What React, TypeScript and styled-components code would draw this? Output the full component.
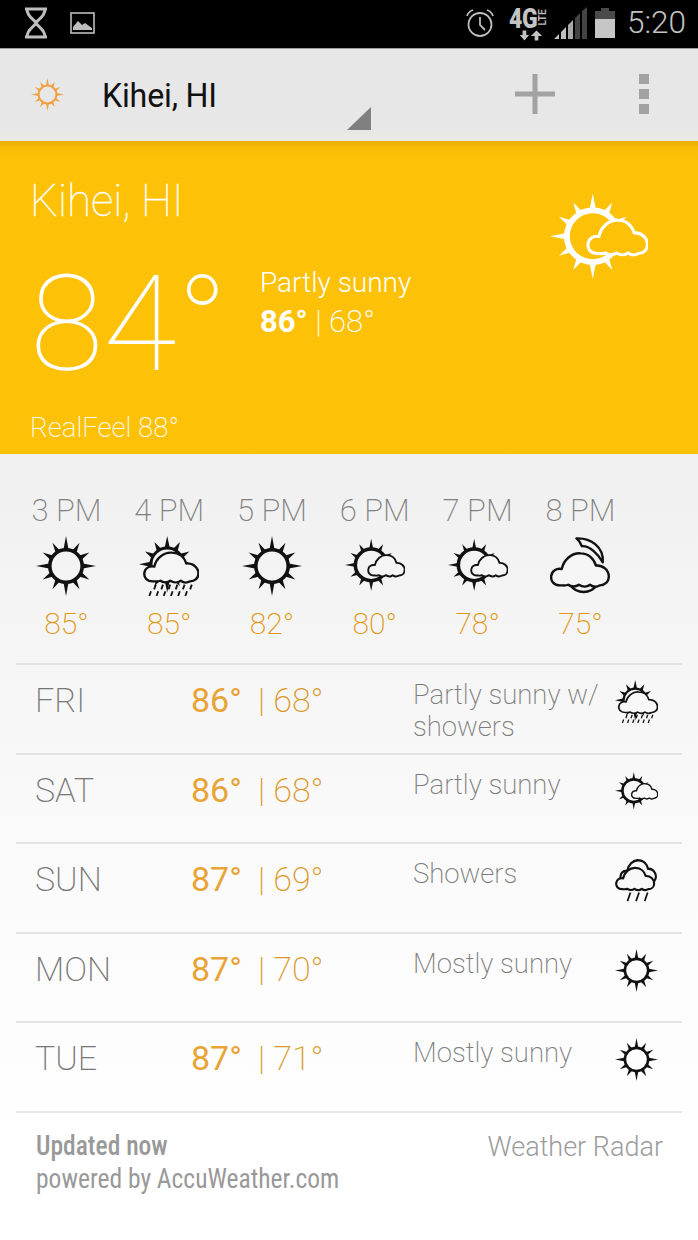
import React from "react";
import styled, { createGlobalStyle } from "styled-components";

const Global = createGlobalStyle`
  html, body { margin: 0; padding: 0; background: #fff; }
  body { font-family: Roboto, "Liberation Sans", sans-serif; }
  * { box-sizing: border-box; }
`;

const Page = styled.div`
  width: 698px;
  height: 1240px;
  overflow: hidden;
  display: flex;
  flex-direction: column;
  background: #fff;
`;

const StatusBar = styled.div`
  height: 49px;
  flex: none;
  background: #000;
  border-bottom: 1px solid #9a9a9a;
  display: flex;
  align-items: center;
  justify-content: space-between;
  padding: 0 12px 2px 24px;
  color: #bcbcbc;
`;
const StatusGroup = styled.div<{ $gap: number }>`
  display: flex;
  align-items: center;
  gap: ${(p) => p.$gap}px;
`;
const Network = styled.div`
  width: 38px;
  height: 34px;
  display: flex;
  flex-direction: column;
  align-items: flex-start;
  margin-left: 6px;
  margin-right: -1px;
`;
const NetworkTop = styled.div`
  display: flex;
  align-items: center;
  height: 22px;
  margin-top: 2px;
`;
const FourG = styled.span`
  font-size: 28px;
  font-weight: 900;
  line-height: 22px;
  letter-spacing: -0.5px;
  color: #c4c4c4;
  transform: scaleX(0.82);
  transform-origin: left center;
  width: 27px;
`;
const Lte = styled.span`
  font-size: 10px;
  font-weight: 700;
  color: #bbb;
  transform: rotate(-90deg);
  width: 12px;
`;
const ArrowSlot = styled.div`
  margin: 0 0 0 8px;
  display: flex;
`;
const Clock = styled.span`
  font-size: 31.5px;
  font-weight: 300;
  line-height: 36px;
  color: #c2c2c2;
  margin-left: 4px;
`;

const Toolbar = styled.div`
  height: 92px;
  flex: none;
  background: linear-gradient(#e7e7e7 0, #e7e7e7 90%, #ebebe6 100%);
  display: flex;
  align-items: center;
  padding: 0 49px 2px 31px;
`;
const Spinner = styled.div`
  position: relative;
  width: 300px;
  height: 100%;
  margin-left: 7px;
  padding-left: 31px;
  padding-top: 2px;
  display: flex;
  align-items: center;
`;
const Place = styled.span`
  font-size: 33px;
  font-weight: 400;
  color: #111;
  letter-spacing: -0.2px;
  transform: scaleX(0.975);
  transform-origin: left center;
  white-space: nowrap;
`;
const Corner = styled.div`
  position: absolute;
  right: 0;
  bottom: 9px;
  width: 0;
  height: 0;
  border-left: 24px solid transparent;
  border-bottom: 23px solid #808080;
`;
const Actions = styled.div`
  margin-left: auto;
  display: flex;
  align-items: center;
  gap: 84px;
`;
const Dots = styled.div`
  display: flex;
  flex-direction: column;
  gap: 5px;
`;
const Dot = styled.span`
  width: 10px;
  height: 10px;
  background: #a2a2a2;
`;

const Hero = styled.section`
  height: 313px;
  flex: none;
  background: linear-gradient(#e9ac0a 0, #f8bc06 6px, #fdc107 16px, #fdc107 100%);
  color: #fff;
  padding: 34px 50px 0 30px;
  position: relative;
  display: flex;
  flex-direction: column;
`;
const HeroCity = styled.div`
  font-size: 44px;
  font-weight: 100;
  line-height: 52px;
  -webkit-text-stroke: 0.3px #fff;
`;
const HeroMain = styled.div`
  display: flex;
  align-items: flex-start;
  margin-top: 31px;
`;
const BigTemp = styled.div`
  font-size: 134px;
  font-weight: 100;
  line-height: 134px;
  width: 230px;
  flex: none;
`;
const Summary = styled.div`
  padding-top: 6px;
`;
const SummaryText = styled.div`
  font-size: 28px;
  font-weight: 300;
  line-height: 38px;
`;
const SummaryTemps = styled.div`
  font-size: 31px;
  font-weight: 200;
  line-height: 40px;
  & b {
    font-weight: 700;
  }
`;
const RealFeel = styled.div`
  margin-top: auto;
  margin-bottom: 9px;
  font-size: 27.5px;
  font-weight: 200;
  line-height: 34px;
  opacity: 0.95;
`;
const HeroIcon = styled.div`
  position: absolute;
  left: 550px;
  top: 52px;
`;

const Body = styled.main`
  flex: 1;
  background: linear-gradient(#f0f0f0 0, #f7f7f7 260px, #fcfcfc 500px, #ffffff 720px);
  display: flex;
  flex-direction: column;
`;
const Hourly = styled.div`
  height: 209px;
  flex: none;
  padding: 38px 0 0 15px;
  display: grid;
  grid-template-columns: repeat(6, 102.8px);
  align-content: start;
`;
const Hour = styled.div`
  display: flex;
  flex-direction: column;
  align-items: center;
`;
const HourLabel = styled.div`
  font-size: 31px;
  font-weight: 200;
  line-height: 38px;
  color: #808080;
  white-space: nowrap;
`;
const HourIcon = styled.div`
  height: 62px;
  margin-top: 5px;
  display: flex;
  align-items: center;
  justify-content: center;
`;
const HourTemp = styled.div`
  font-size: 30px;
  font-weight: 200;
  line-height: 36px;
  margin-top: 9px;
  color: #e0960f;
`;

const Days = styled.div`
  margin: 0 16px;
  flex: none;
`;
const Day = styled.div`
  height: 89.6px;
  border-top: 2px solid #e3e3e3;
  display: grid;
  grid-template-columns: 156px 222px 190px 1fr;
  padding-left: 19px;
`;
const DayName = styled.div`
  font-size: 34px;
  font-weight: 200;
  line-height: 40px;
  padding-top: 15px;
  color: #777;
`;
const DayTemps = styled.div`
  font-size: 34px;
  font-weight: 400;
  line-height: 40px;
  padding-top: 15px;
  color: #e8a437;
  white-space: nowrap;
`;
const LowTemp = styled.span`
  font-weight: 200;
  color: #d99a2b;
  margin-left: 16px;
`;
const DayCond = styled.div`
  font-size: 27.5px;
  font-weight: 200;
  line-height: 32px;
  padding-top: 14px;
  color: #7c7c7c;
`;
const DayIcon = styled.div`
  display: flex;
  justify-content: center;
  padding-top: 15px;
  margin-left: 9px;
  width: 48px;
`;

const Footer = styled.footer`
  margin: 0 16px;
  border-top: 2px solid #e8e8e8;
  padding: 16px 19px 0 20px;
  display: flex;
  justify-content: space-between;
  color: #9a9a9a;
`;
const Credits = styled.div`
  font-size: 27px;
  font-weight: 400;
  line-height: 33px;
  font-stretch: 75%;
  color: #999;
  padding-top: 1px;
  transform: scaleX(0.945);
  transform-origin: left top;
  white-space: nowrap;
`;
const CreditsStrong = styled.div`
  font-weight: 500;
`;
const Radar = styled.div`
  font-size: 27px;
  font-weight: 300;
  line-height: 36px;
  color: #9c9c9c;
`;

const CLOUD =
  "M16 58 C5 58 0 50 1 42 C2 33 10 28 19 30 C22 14 36 2 51 3 C64 3 74 12 77 24 C89 23 99 32 99 43 C99 52 92 58 84 58 C79 61 72 61 67 57 C62 61 54 61 48 57 C43 61 35 61 30 57 C26 59 21 58 16 58 Z";

type SunProps = { cx: number; cy: number; r: number; rayOut: number; sw: number; ink: string; rayBase?: number };
const Sun = ({ cx, cy, r, rayOut, sw, ink, rayBase = 4.5 }: SunProps) => (
  <g>
    {Array.from({ length: 12 }, (_, i) => {
      const a = (i * Math.PI) / 6;
      const len = i % 3 === 0 ? rayOut : r + (rayOut - r) * 0.78;
      const ux = Math.cos(a);
      const uy = Math.sin(a);
      const bx = cx + ux * (r - 1);
      const by = cy + uy * (r - 1);
      return (
        <polygon
          key={i}
          fill={ink}
          points={`${bx - uy * rayBase},${by + ux * rayBase} ${bx + uy * rayBase},${by - ux * rayBase} ${cx + ux * len},${cy + uy * len}`}
        />
      );
    })}
    <circle cx={cx} cy={cy} r={r} fill="none" stroke={ink} strokeWidth={sw} />
  </g>
);

type CloudProps = { x: number; y: number; s: number; sy?: number; sw: number; ink: string; bg: string };
const Cloud = ({ x, y, s, sy, sw, ink, bg }: CloudProps) => (
  <path
    d={CLOUD}
    transform={`translate(${x} ${y}) scale(${s} ${sy ?? s})`}
    fill={bg}
    stroke={ink}
    strokeWidth={sw / s}
    strokeLinejoin="round"
  />
);

const Rain = ({ xs, y, len, ink, sw }: { xs: number[]; y: number; len: number; ink: string; sw: number }) => (
  <g stroke={ink} strokeWidth={sw} strokeLinecap="butt">
    {xs.map((x) => (
      <line key={x} x1={x} y1={y} x2={x - len * 0.35} y2={y + len} />
    ))}
  </g>
);

type Kind = "sun" | "partly" | "partlyShowers" | "showers" | "moon";
const WeatherIcon = ({ kind, w, h, ink = "#111", bg = "#f5f5f5" }: { kind: Kind; w: number; h: number; ink?: string; bg?: string }) => {
  if (kind === "sun")
    return (
      <svg width={w} height={h} viewBox="0 0 100 100">
        <Sun cx={50} cy={50} r={27} rayOut={50} sw={6} ink={ink} />
      </svg>
    );
  if (kind === "partly")
    return (
      <svg width={w} height={h} viewBox="0 0 110 100">
        <Sun cx={48} cy={48} r={29} rayOut={48} sw={6.5} ink={ink} rayBase={4} />
        <Cloud x={42} y={28} s={0.68} sy={0.68} sw={3.5} ink={ink} bg={bg} />
      </svg>
    );
  if (kind === "partlyShowers")
    return (
      <svg width={w} height={h} viewBox="0 0 100 100">
        <Sun cx={47} cy={47} r={27} rayOut={47} sw={5} ink={ink} />
        <Cloud x={8} y={25} s={0.92} sy={0.87} sw={4} ink={ink} bg={bg} />
        <Rain xs={[28, 40, 52, 64, 76, 88]} y={81} len={8} ink={ink} sw={3} />
        <Rain xs={[20, 32, 44, 56, 68, 80]} y={92} len={8} ink={ink} sw={3} />
      </svg>
    );
  if (kind === "showers")
    return (
      <svg width={w} height={h} viewBox="0 0 100 100">
        <Cloud x={12} y={0} s={0.84} sy={0.95} sw={5} ink={ink} bg={bg} />
        <Cloud x={2} y={18} s={0.9} sy={0.9} sw={5} ink={ink} bg={bg} />
        <Rain xs={[36, 56, 76]} y={78} len={20} ink={ink} sw={4} />
      </svg>
    );
  return (
    <svg width={w} height={h} viewBox="0 0 100 100">
      <path d="M44 4 C68 3 90 18 88 44 C80 30 66 16 53 17 C51 11 48 7 44 4 Z" fill={bg} stroke={ink} strokeWidth={4} strokeLinejoin="round" />
      <path d="M34 82 C45 97 67 97 78 82" fill="none" stroke={ink} strokeWidth={4} />
      <Cloud x={1} y={26} s={0.98} sy={0.97} sw={4} ink={ink} bg={bg} />
    </svg>
  );
};

const Hourglass = () => (
  <svg width="24" height="32" viewBox="0 0 24 32" fill="none" stroke="#bdbdbd" strokeWidth="3">
    <path d="M1 2 H23 M1 30 H23 M3 2 C3 10 10 12 12 16 C14 12 21 10 21 2 M3 30 C3 22 10 20 12 16 C14 20 21 22 21 30" />
  </svg>
);
const ImageGlyph = () => (
  <svg width="25" height="22" viewBox="0 0 25 22">
    <rect x="1" y="1" width="23" height="20" fill="none" stroke="#bdbdbd" strokeWidth="1.6" />
    <path d="M3 18 L3 15 L8 9 L12 13 L15 11 L22 16 L22 18 Z" fill="#bdbdbd" />
  </svg>
);
const Alarm = () => (
  <svg width="30" height="30" viewBox="0 0 30 30" fill="none" stroke="#bdbdbd" strokeWidth="1.8">
    <circle cx="15" cy="16.5" r="11.5" />
    <path d="M15 9 V17 L20 22" />
    <path d="M2 8 C3 5 5 3 8 2 M22 2 C25 3 27 5 28 8" />
  </svg>
);
const Arrows = () => (
  <svg width="26" height="11" viewBox="0 0 28 11" fill="#c4c4c4">
    <path d="M6 0 H10 V5 H13 L8 11 L3 5 H6 Z M19 11 H23 V6 H27 L21 0 L15 6 H19 Z" />
  </svg>
);
const Signal = () => (
  <svg width="33" height="32" viewBox="0 0 33 32">
    <path d="M0 32 L5 27 V32 Z M7 25 L12 20 V32 H7 Z" fill="#c0c0c0" />
    <path d="M14 18 L19 13 V32 H14 Z" fill="#a8a8a8" />
    <path d="M21 11 L26 6 V32 H21 Z M28 4 L33 0 V32 H28 Z" fill="#444" />
  </svg>
);
const Battery = () => (
  <svg width="20" height="30" viewBox="0 0 20 30">
    <path d="M6 0 H14 V3 H20 V30 H0 V3 H6 Z" fill="#4a4a4a" />
    <rect y="11" width="20" height="19" fill="#c6c6c6" />
  </svg>
);
const Plus = () => (
  <svg width="40" height="40" viewBox="0 0 40 40" fill="#a2a2a2">
    <rect x="17.5" y="0" width="5" height="40" />
    <rect x="0" y="17.5" width="40" height="5" />
  </svg>
);

const hours: [string, Kind, string][] = [
  ["3 PM", "sun", "85°"],
  ["4 PM", "partlyShowers", "85°"],
  ["5 PM", "sun", "82°"],
  ["6 PM", "partly", "80°"],
  ["7 PM", "partly", "78°"],
  ["8 PM", "moon", "75°"],
];
const days: [string, string, string, React.ReactNode, Kind][] = [
  ["FRI", "86°", "68°", <>Partly sunny w/<br />showers</>, "partlyShowers"],
  ["SAT", "86°", "68°", "Partly sunny", "partly"],
  ["SUN", "87°", "69°", "Showers", "showers"],
  ["MON", "87°", "70°", "Mostly sunny", "sun"],
  ["TUE", "87°", "71°", "Mostly sunny", "sun"],
];

export default function App() {
  return (
    <Page>
      <Global />
      <StatusBar>
        <StatusGroup $gap={22}>
          <Hourglass />
          <ImageGlyph />
        </StatusGroup>
        <StatusGroup $gap={8}>
          <Alarm />
          <Network>
            <NetworkTop>
              <FourG>4G</FourG>
              <Lte>LTE</Lte>
            </NetworkTop>
            <ArrowSlot>
              <Arrows />
            </ArrowSlot>
          </Network>
          <Signal />
          <Battery />
          <Clock>5:20</Clock>
        </StatusGroup>
      </StatusBar>
      <Toolbar>
        <WeatherIcon kind="sun" w={33} h={33} ink="#f0a040" />
        <Spinner>
          <Place>Kihei, HI</Place>
          <Corner />
        </Spinner>
        <Actions>
          <Plus />
          <Dots>
            <Dot />
            <Dot />
            <Dot />
          </Dots>
        </Actions>
      </Toolbar>
      <Hero>
        <HeroCity>Kihei, HI</HeroCity>
        <HeroMain>
          <BigTemp>84°</BigTemp>
          <Summary>
            <SummaryText>Partly sunny</SummaryText>
            <SummaryTemps>
              <b>86°</b> | 68°
            </SummaryTemps>
          </Summary>
        </HeroMain>
        <RealFeel>RealFeel 88°</RealFeel>
        <HeroIcon>
          <WeatherIcon kind="partly" w={98} h={90} ink="#fff" bg="#fdc107" />
        </HeroIcon>
      </Hero>
      <Body>
        <Hourly>
          {hours.map(([label, kind, temp]) => (
            <Hour key={label}>
              <HourLabel>{label}</HourLabel>
              <HourIcon>
                <WeatherIcon kind={kind} w={60} h={60} />
              </HourIcon>
              <HourTemp>{temp}</HourTemp>
            </Hour>
          ))}
        </Hourly>
        <Days>
          {days.map(([name, hi, lo, cond, kind]) => (
            <Day key={name}>
              <DayName>{name}</DayName>
              <DayTemps>
                {hi}
                <LowTemp>| {lo}</LowTemp>
              </DayTemps>
              <DayCond>{cond}</DayCond>
              <DayIcon>
                <WeatherIcon kind={kind} w={43} h={43} bg="#f8f8f8" />
              </DayIcon>
            </Day>
          ))}
        </Days>
        <Footer>
          <Credits>
            <CreditsStrong>Updated now</CreditsStrong>
            powered by AccuWeather.com
          </Credits>
          <Radar>Weather Radar</Radar>
        </Footer>
      </Body>
    </Page>
  );
}
